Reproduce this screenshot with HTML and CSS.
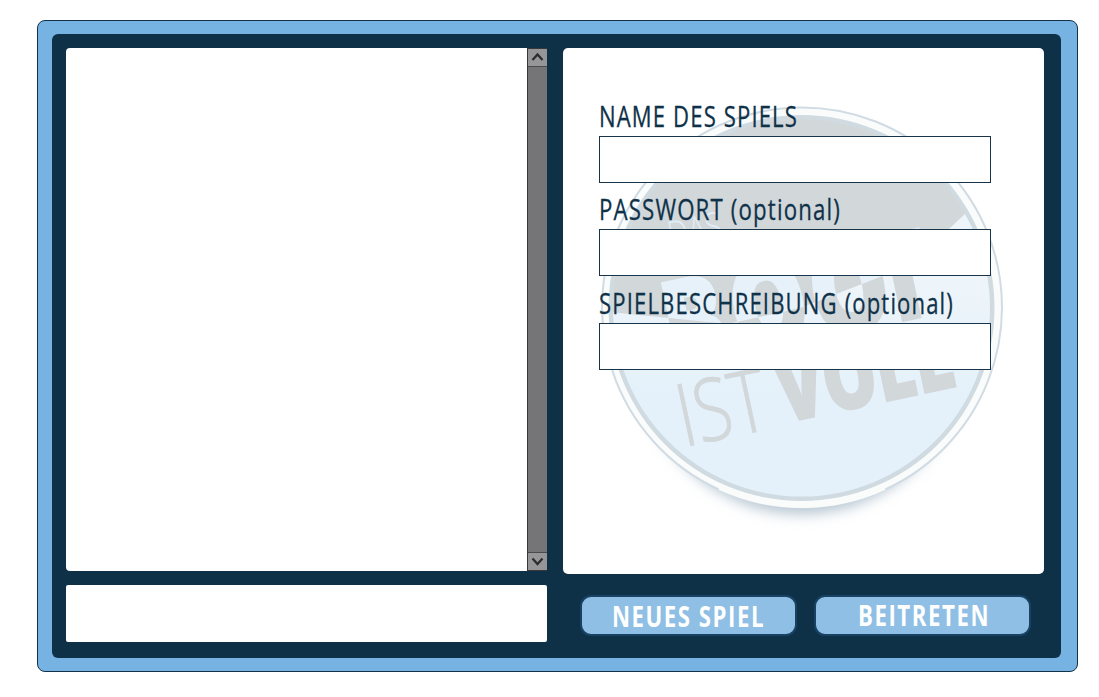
FILE: index.html
```html
<!DOCTYPE html>
<html lang="de">
<head>
<meta charset="utf-8">
<title>Das Boot ist voll</title>
<link rel="stylesheet" href="styles.css">
</head>
<body>
<main class="frame">
  <div class="board">
    <section class="column">
      <div class="games">
        <div class="games-list"></div>
        <div class="scrollbar">
          <div class="arrow"><svg viewBox="0 0 18 17"><path d="M4 11 9 5.5 14 11"/></svg></div>
          <div class="track"></div>
          <div class="arrow"><svg viewBox="0 0 18 17"><path d="M4 5.5 9 11 14 5.5"/></svg></div>
        </div>
      </div>
      <div class="message"></div>
    </section>
    <section class="column">
      <div class="panel">
        <svg class="emblem" viewBox="563 48 481 526" aria-hidden="true">
          <defs>
            <linearGradient id="sky" x1="0" y1="0" x2="0" y2="1"><stop offset=".45" stop-color="#edf4fa"/><stop offset=".75" stop-color="#e4f1fa"/></linearGradient>
            <filter id="soft" x="-20%" y="-20%" width="140%" height="140%"><feGaussianBlur stdDeviation="7"/></filter>
            <clipPath id="disc"><circle cx="801.5" cy="308" r="189"/></clipPath>
            <clipPath id="dark"><path d="M590 90H1020V165L966 213 950 228 880 277 800 308 728 324 610 312 590 309Z"/></clipPath>
          </defs>
          <ellipse cx="801.5" cy="330" rx="172" ry="184" fill="#b4c4d0" filter="url(#soft)"/>
          <circle cx="802" cy="307.5" r="200" fill="#fafcfc" stroke="#d1dbe3" stroke-width="2"/>
          <path d="M719 488.500A199.500 199.500 0 0 0 885 488.500" fill="none" stroke="#fafcfc" stroke-width="3"/>
          <circle cx="801.5" cy="308" r="193" fill="#d0dae1"/>
          <circle cx="801.5" cy="308" r="188.5" fill="url(#sky)"/>
          <g clip-path="url(#disc)">
            <g class="heavy shade" transform="translate(673 370) rotate(-12)">
              <text x="0" textLength="62" lengthAdjust="spacingAndGlyphs">B</text>
              <text x="68" textLength="78" lengthAdjust="spacingAndGlyphs">O</text>
              <text x="149" textLength="80" lengthAdjust="spacingAndGlyphs">O</text>
              <text x="216" textLength="56" lengthAdjust="spacingAndGlyphs">T</text>
            </g>
            <g clip-path="url(#dark)">
              <rect x="590" y="90" width="430" height="240" fill="#d2d7da"/>
              <g class="heavy light" transform="translate(673 370) rotate(-12)">
                <text x="0" textLength="62" lengthAdjust="spacingAndGlyphs">B</text>
                <text x="68" textLength="78" lengthAdjust="spacingAndGlyphs">O</text>
                <text x="149" textLength="80" lengthAdjust="spacingAndGlyphs">O</text>
                <text x="216" textLength="56" lengthAdjust="spacingAndGlyphs">T</text>
              </g>
              <text class="thin" fill="#e1edf6" transform="translate(671 249) rotate(-12)" font-size="38" textLength="54" lengthAdjust="spacingAndGlyphs">DAS</text>
            </g>
            <text class="thin ist" transform="translate(684 447) rotate(-12)" font-size="87" textLength="90" lengthAdjust="spacingAndGlyphs">IST</text>
            <text class="heavy voll" transform="translate(784 423) rotate(-12)" textLength="178" lengthAdjust="spacingAndGlyphs">VOLL</text>
          </g>
        </svg>
        <form class="form">
          <label class="field first">
            <svg class="caption" viewBox="0 0 392 34"><text x="0" y="24.5" textLength="199" lengthAdjust="spacingAndGlyphs">NAME DES SPIELS</text></svg>
            <input class="entry" type="text">
          </label>
          <label class="field">
            <svg class="caption" viewBox="0 0 392 34"><text x="0" y="24.5" textLength="242" lengthAdjust="spacingAndGlyphs">PASSWORT (optional)</text></svg>
            <input class="entry" type="password">
          </label>
          <label class="field last">
            <svg class="caption" viewBox="0 0 392 34"><text x="0" y="24.5" textLength="355" lengthAdjust="spacingAndGlyphs">SPIELBESCHREIBUNG (optional)</text></svg>
            <input class="entry" type="text">
          </label>
        </form>
      </div>
      <div class="actions">
        <button class="action" type="button"><svg viewBox="0 0 213 37"><text x="30" y="29.5" textLength="153" lengthAdjust="spacingAndGlyphs">NEUES SPIEL</text></svg></button>
        <button class="action" type="button"><svg viewBox="0 0 213 37"><text x="42" y="28.5" textLength="132" lengthAdjust="spacingAndGlyphs">BEITRETEN</text></svg></button>
      </div>
    </section>
  </div>
</main>
</body>
</html>
```
FILE: styles.css
```css
* { box-sizing: border-box; }
body { margin: 0; padding: 20px 21px 25px 37px; height: 697px; background: #fff; overflow: hidden; font-family: "Open Sans", sans-serif; }
svg { display: block; overflow: visible; }
.frame { height: 652px; padding: 13px 16px 13px 14px; background: #76b2e2; border: 1px solid #123249; border-radius: 8px; }
.board { height: 624px; display: flex; gap: 16px; padding: 14px 17px 14px 14px; background: #0f3147; border-radius: 6px; }
.column { width: 481px; display: flex; flex-direction: column; }
.games { height: 523px; display: flex; background: #fff; border-radius: 4px 0 0 4px; }
.games-list { flex: 1; }
.scrollbar { width: 20px; display: flex; flex-direction: column; border: 1px solid #38383a; border-right: 0; background: #757577; }
.arrow { height: 18px; background: #969698; border-bottom: 1px solid #4a4a4c; }
.arrow:last-child { border-bottom: 0; border-top: 1px solid #4a4a4c; }
.arrow svg { width: 19px; height: 17px; }
.arrow path { fill: none; stroke: #2c2c2e; stroke-width: 2.2; }
.track { flex: 1; }
.message { height: 57px; margin-top: 14px; background: #fff; border-radius: 2px; }
.panel { display: grid; width: 481px; height: 526px; background: #fff; border-radius: 5px; overflow: hidden; }
.emblem, .form { grid-area: 1 / 1; }
.emblem { width: 481px; height: 526px; }
.form { z-index: 1; padding: 54px 0 0 36px; display: flex; flex-direction: column; }
.field { display: block; width: 392px; height: 81px; }
.first { margin-bottom: 12px; }
.last { margin-top: 13px; }
.caption { width: 392px; height: 34px; }
.caption text { font-size: 29px; font-weight: 500; letter-spacing: 1.5px; fill: #103249; stroke: #103249; stroke-width: .3px; }
.entry { display: block; width: 392px; height: 47px; padding: 0 8px; border: 1px solid #17344a; border-radius: 0; background: #fff; font-size: 22px; outline: 0; }
.heavy { font-family: "Open Sans", sans-serif; font-size: 122px; font-weight: 800; stroke-width: 2px; }
.shade, .voll { fill: #d2d7da; stroke: #d2d7da; }
.light { fill: #e7f1f9; stroke: #e7f1f9; }
.voll { font-size: 90px; stroke-width: 2px; }
.thin { font-family: "Open Sans", sans-serif; font-weight: 300; }
.ist { fill: #d2d7da; stroke: #d2d7da; stroke-width: 1px; }
.actions { display: flex; gap: 17px; padding: 21px 0 0 17px; }
.action { width: 217px; height: 41px; padding: 0; border: 2px solid #174264; border-radius: 11px; background: #8fbfe4; flex: none; }
.action svg { width: 213px; height: 37px; }
.action text { font-family: "Open Sans", sans-serif; font-size: 29px; font-weight: 700; letter-spacing: 2px; fill: #fff; }
```
